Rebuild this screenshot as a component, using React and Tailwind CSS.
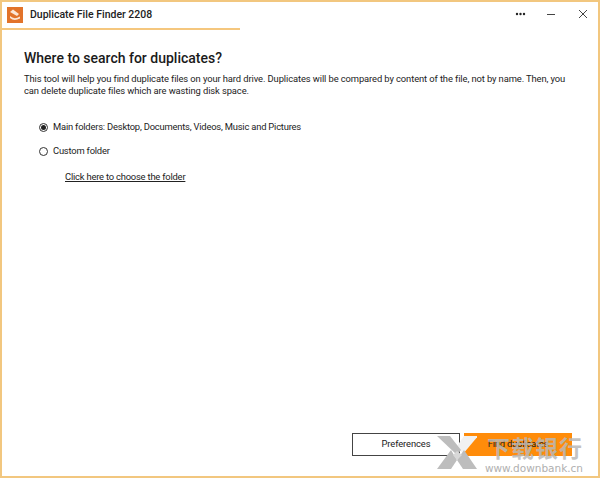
export default function App() {
  return (
    <div className="relative w-[600px] h-[478px] bg-white overflow-hidden border-2 border-[#f2c77f] font-['Roboto',sans-serif] text-[#1a1a1a] flex flex-col box-border">
      <div className="h-[26px] w-[238px] border-b-2 border-[#f5c77e] box-content flex items-center shrink-0">
        <svg width="16" height="16" viewBox="0 0 16 16" className="ml-[5px]">
          <rect width="16" height="16" fill="#e2732a" />
          <path d="M3 5 L6 2.5 L12 7 L10 9 Z" fill="#fbe6d6" />
          <path d="M3 9 Q7 13 13 9.5 L13 11.5 Q7 14.5 3 11 Z" fill="#fbe6d6" />
        </svg>
        <span className="ml-[7px] text-[10.5px] font-medium text-[#222]">Duplicate File Finder 2208</span>
      </div>
      <div className="absolute top-[5px] right-[10px] flex items-center text-[#333]">
        <svg width="74" height="16" viewBox="0 0 74 16">
          <circle cx="3" cy="7" r="1.2" fill="#222" />
          <circle cx="6.5" cy="7" r="1.2" fill="#222" />
          <circle cx="10" cy="7" r="1.2" fill="#222" />
          <path d="M33 7.5 H41" stroke="#444" strokeWidth="1" />
          <path d="M65 3 L73 11 M73 3 L65 11" stroke="#444" strokeWidth="1" fill="none" />
        </svg>
      </div>
      <main className="flex-1 flex flex-col pl-[22px] pr-[26px]">
        <h1 className="mt-[19px] text-[14px] leading-[18px] font-medium text-[#1a1a1a]">Where to search for duplicates?</h1>
        <p className="mt-[6px] text-[9.4px] leading-[11.5px] tracking-[-0.1px] text-[#222]">
          This tool will help you find duplicate files on your hard drive. Duplicates will be compared by content of the file, not by name. Then, you can delete duplicate files which are wasting disk space.
        </p>
        <div className="mt-[24px] ml-[15px] flex items-center gap-[5px] h-[14px]">
          <span className="w-[9px] h-[9px] rounded-full border border-[#333] flex items-center justify-center">
            <span className="w-[5px] h-[5px] rounded-full bg-[#222]" />
          </span>
          <span className="text-[9.4px] tracking-[-0.2px] text-[#222]">Main folders: Desktop, Documents, Videos, Music and Pictures</span>
        </div>
        <div className="mt-[10px] ml-[15px] flex items-center gap-[5px] h-[14px]">
          <span className="w-[9px] h-[9px] rounded-full border border-[#333]" />
          <span className="text-[9.4px] tracking-[-0.2px] text-[#222]">Custom folder</span>
        </div>
        <a className="mt-[12px] ml-[41px] text-[9.4px] leading-[14px] tracking-[-0.2px] text-[#222] underline">Click here to choose the folder</a>
        <div className="mt-auto mb-[20px] flex justify-end gap-[4px]">
          <button className="w-[108px] h-[23px] border border-[#444] bg-white text-[9.4px] tracking-[-0.1px] text-[#222]">Preferences</button>
          <button className="w-[108px] h-[23px] bg-[#ff8c0a] text-[9.4px] tracking-[-0.2px] text-[#222]">Find duplicates</button>
        </div>
      </main>
      <div className="absolute left-[435px] top-[434px] w-[150px] h-[38px] flex items-start">
        <svg width="40" height="34" viewBox="0 0 40 34" className="shrink-0">
          <path d="M27 0 H41 L26 18 L20 10 Z" fill="#f1f1f1" />
          <path d="M0 0 H13 L24 14 L20 19 Z" fill="#bdbdbd" />
          <path d="M0 33 L14 14 L20 24 L14 33 Z" fill="#bdbdbd" />
          <path d="M20 24 L27 14 L40 33 H26 Z" fill="#bdbdbd" />
          <path d="M20 15 L25 19 L20 24 L16 19 Z" fill="#d8d8d8" />
        </svg>
        <div className="ml-[8px] flex flex-col items-end w-[98px]">
          <span className="text-[23px] leading-[23px] text-[#b8b8b8]/85 font-bold tracking-[1px] font-['Noto_Sans_CJK_SC',sans-serif]">下载银行</span>
          <span className="text-[10.5px] leading-[11px] text-[#b0b0b0] mt-[4px] font-['DejaVu_Sans',sans-serif]">www.downbank.cn</span>
        </div>
      </div>
    </div>
  );
}
